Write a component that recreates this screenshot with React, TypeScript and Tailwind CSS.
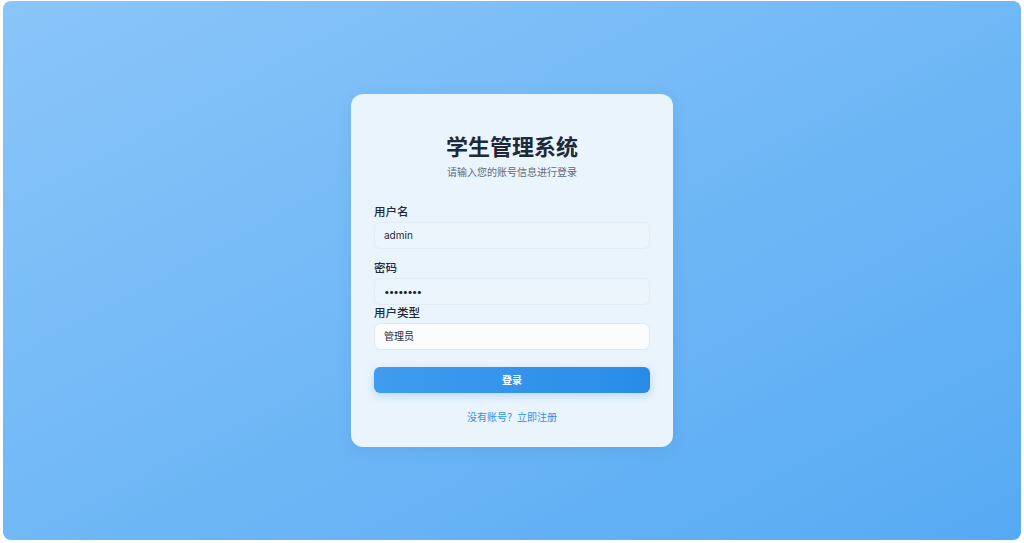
export default function App() {
  return (
    <div
      className="h-[543px] w-full bg-white pt-px pr-[3px] pb-[3px] pl-[3px]"
      style={{ fontFamily: '"Inter", "Noto Sans CJK SC", sans-serif' }}
    >
      <div className="flex h-full w-full items-center justify-center rounded-lg bg-gradient-to-br from-[#8ac5f9] via-[#70b8f6] to-[#56aaf3]">
        <div className="flex w-[322px] flex-col rounded-xl bg-[#eaf4fd] px-[23px] pt-[38px] pb-[22px] shadow-[0_4px_16px_rgba(30,100,180,0.12)]">
          <h1 className="text-center text-[22px] leading-[30px] font-bold text-[#1e2938]">
            学生管理系统
          </h1>
          <p className="mt-[3px] text-center text-[10px] leading-[15px] text-[#5f6b7a]">
            请输入您的账号信息进行登录
          </p>

          <label className="mt-[25px] text-[11.5px] leading-[15px] font-medium text-[#1f2937]">
            用户名
          </label>
          <div className="mt-[2px] flex h-[27px] items-center rounded-md border border-[#e2ecf6] bg-[#ecf4fc] px-[9px] text-[10px] text-[#1f2937]">
            admin
          </div>

          <label className="mt-[12px] text-[11.5px] leading-[15px] font-medium text-[#1f2937]">
            密码
          </label>
          <div className="mt-[2px] flex h-[27px] items-center rounded-md border border-[#e2ecf6] bg-[#ecf4fc] px-[9px] text-[10px] tracking-[-1px] text-[#1f2937]">
            ••••••••
          </div>

          <label className="mt-px text-[11.5px] leading-[15px] font-medium text-[#1f2937]">
            用户类型
          </label>
          <div className="mt-[2px] flex h-[27px] items-center rounded-md border border-[#dde8f3] bg-[#fafcfe] px-[9px] text-[10px] text-[#1f2937]">
            管理员
          </div>

          <button className="mt-[17px] h-[26px] rounded-md bg-gradient-to-r from-[#3f9cef] to-[#288ce7] text-[10px] font-semibold text-white shadow-[0_3px_8px_rgba(40,140,231,0.25)]">
            登录
          </button>

          <a className="mt-[17px] text-center text-[10px] leading-[15px] text-[#2f8fe6]">
            没有账号？立即注册
          </a>
        </div>
      </div>
    </div>
  );
}
